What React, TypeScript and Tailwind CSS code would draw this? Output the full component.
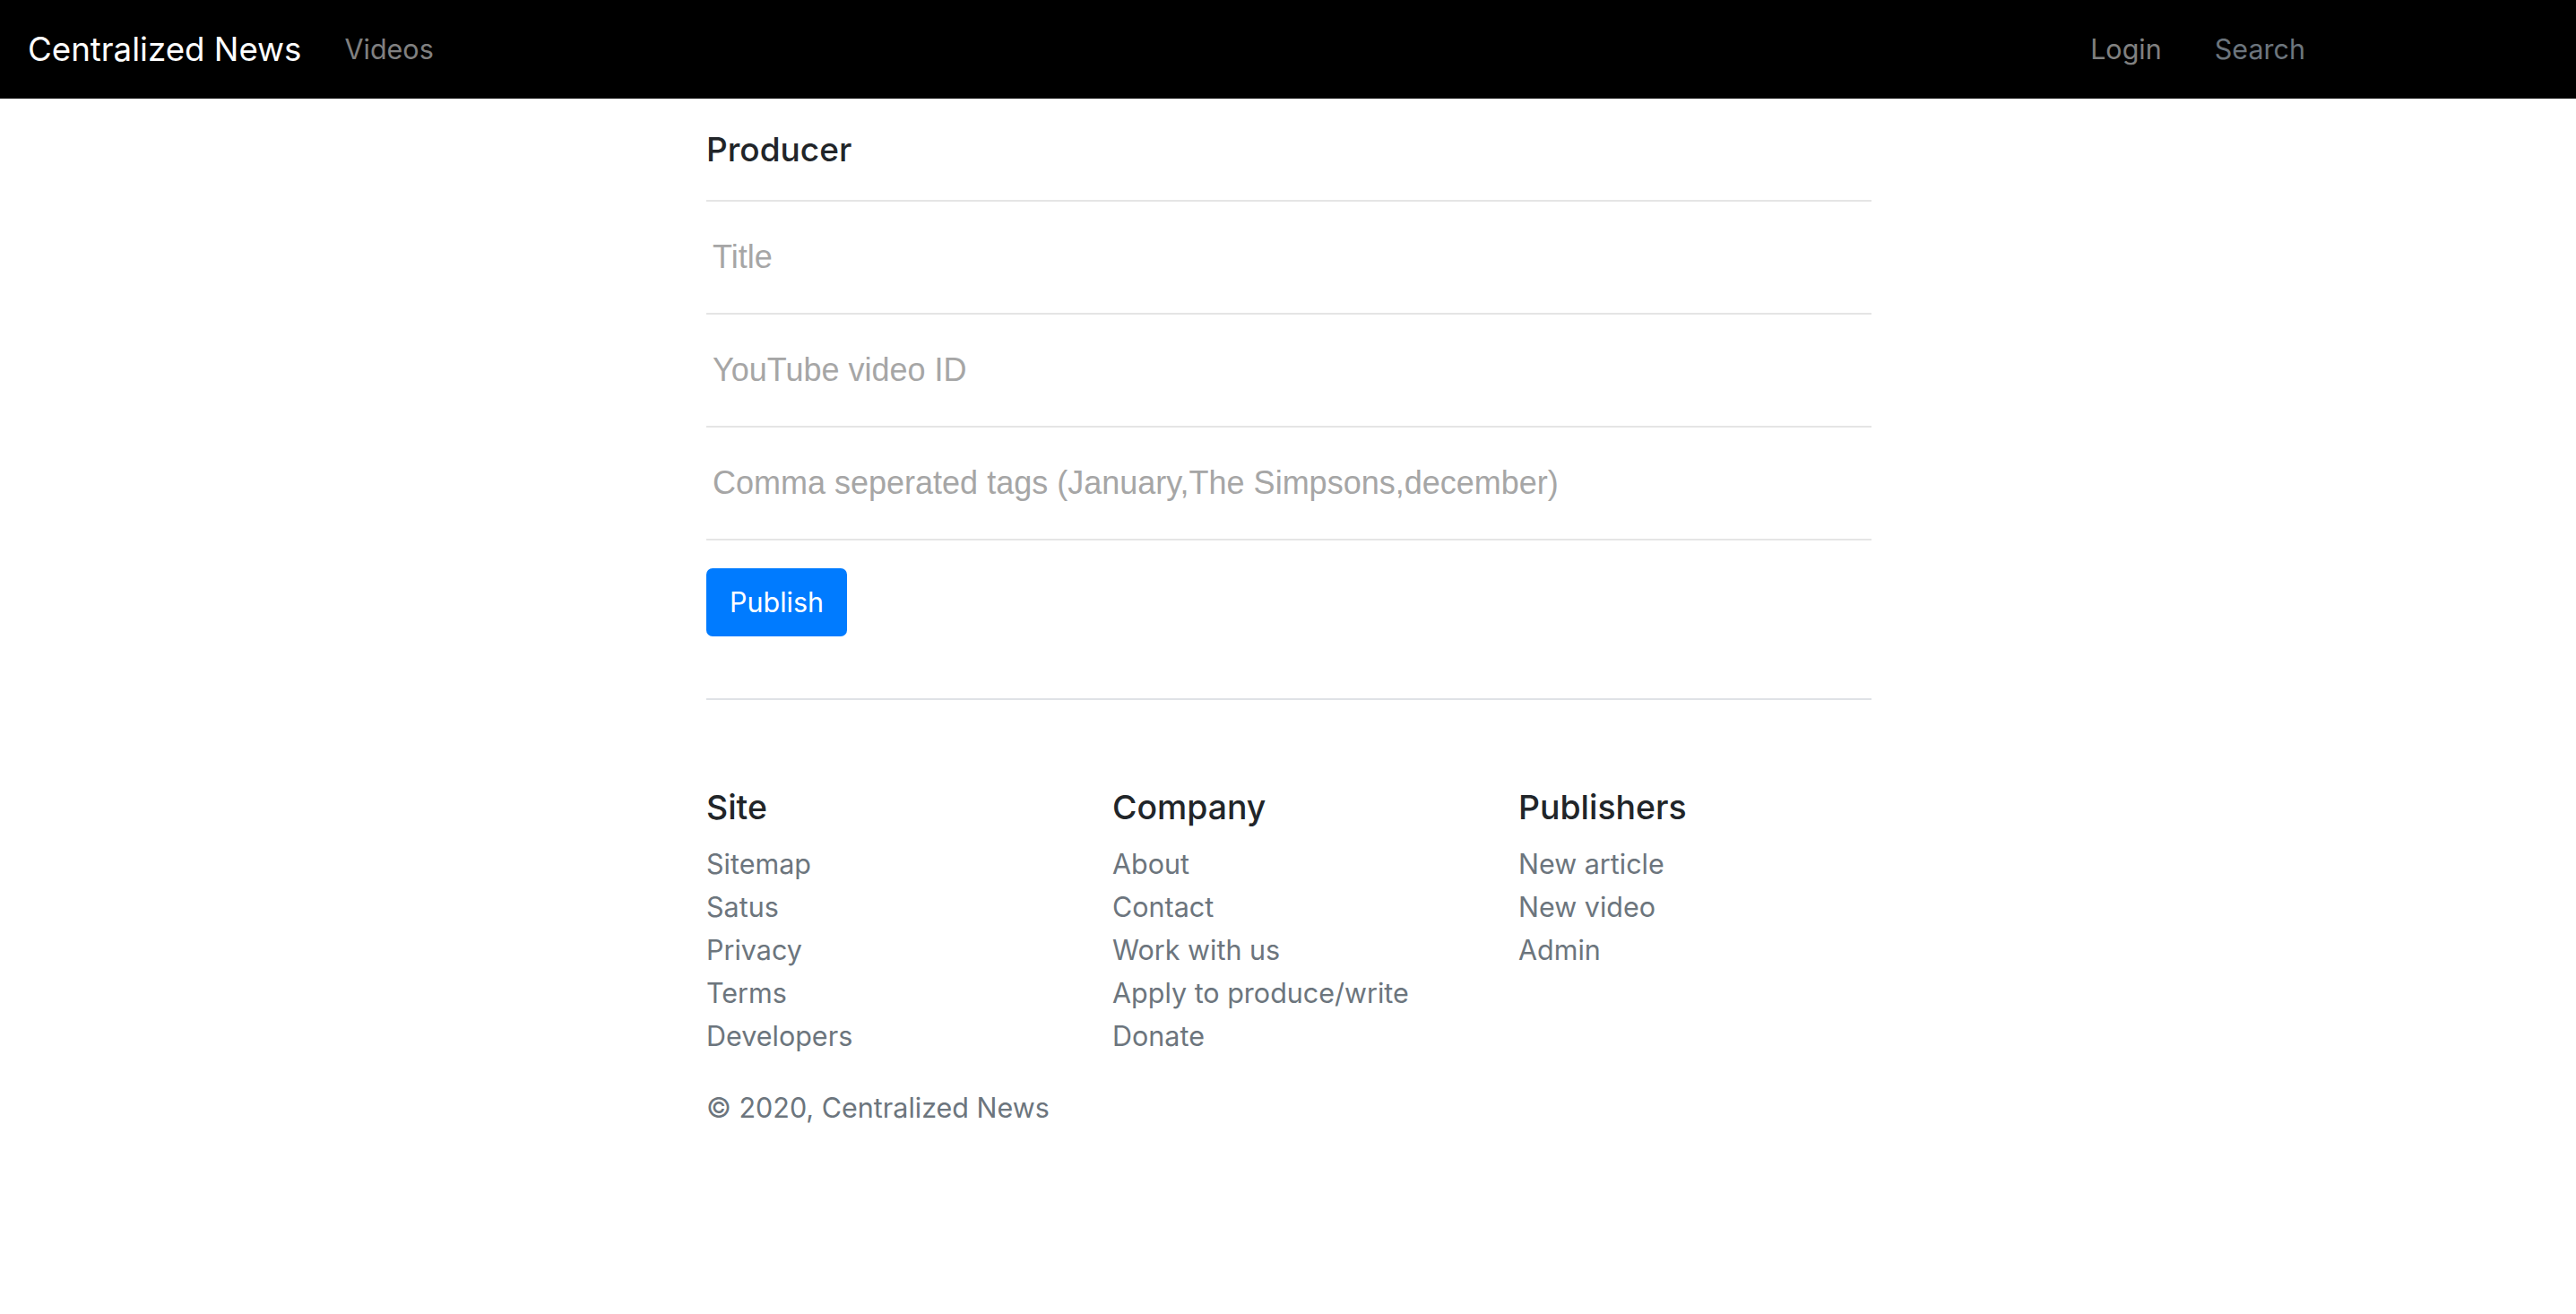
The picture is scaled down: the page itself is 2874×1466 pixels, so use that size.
const sans = "font-['Inter','Liberation_Sans',sans-serif]";

function Navbar() {
  return (
    <nav className={`flex h-[110px] items-center bg-black pl-[31px] ${sans}`}>
      <a className="text-[36.67px] leading-[44px] text-white">Centralized News</a>
      <a className="ml-[48px] text-[30.5px] text-[#808080]">Videos</a>
      <div className="ml-auto mr-[302px] flex items-center">
        <a className="text-[30.5px] text-[#808080]">Login</a>
        <button className="ml-[59px] text-[30.5px] text-[#6c757d]">Search</button>
      </div>
    </nav>
  );
}

function Field({ placeholder }: { placeholder: string }) {
  return (
    <input
      type="text"
      placeholder={placeholder}
      className="block h-[126px] w-full border-b-2 border-[#e5e5e5] pl-[7px] font-['Liberation_Sans',sans-serif] text-[36px] text-[#212529] outline-none placeholder:text-[#a6a6a6]"
    />
  );
}

const footer = [
  { title: "Site", links: ["Sitemap", "Satus", "Privacy", "Terms", "Developers"] },
  { title: "Company", links: ["About", "Contact", "Work with us", "Apply to produce/write", "Donate"] },
  { title: "Publishers", links: ["New article", "New video", "Admin"] },
];

export default function App() {
  return (
    <div className="min-h-screen bg-white">
      <Navbar />
      <main className={`mx-auto w-[1300px] translate-x-[1px] ${sans}`}>
        <h5 className="mt-[35px] text-[37px] font-medium leading-[44px] text-[#212529]">Producer</h5>
        <hr className="mt-[34px] border-t-2 border-[#e5e5e5]" />
        <Field placeholder="Title" />
        <Field placeholder="YouTube video ID" />
        <Field placeholder="Comma seperated tags (January,The Simpsons,december)" />
        <button className="mt-[31px] h-[76px] rounded-[7px] bg-[#007bff] px-[26px] text-[30.5px] text-white">
          Publish
        </button>
        <hr className="mt-[69px] border-t-2 border-[#dfe2e6]" />

        <footer className="pb-[100px]">
          <div className="mt-[98px] grid grid-cols-[453px_453px_1fr]">
            {footer.map((col) => (
              <div key={col.title}>
                <h5 className="text-[37.4px] font-medium leading-[44px] text-[#212529]">{col.title}</h5>
                <ul className="mt-[17px]">
                  {col.links.map((l) => (
                    <li key={l} className="text-[30.5px] leading-[48px] text-[#6c757d]">
                      <a>{l}</a>
                    </li>
                  ))}
                </ul>
              </div>
            ))}
          </div>
          <p className="mt-[32px] text-[30.5px] leading-[48px] text-[#6c757d]">© 2020, Centralized News</p>
        </footer>
      </main>
    </div>
  );
}
